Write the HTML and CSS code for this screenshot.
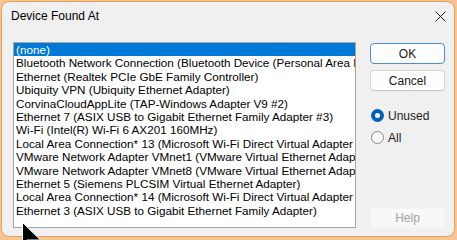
FILE: index.html
```html
<!DOCTYPE html>
<html lang="en">
<head>
    <meta charset="UTF-8">
    <title>Device Found At</title>
    <link rel="stylesheet" href="styles.css">
</head>
<body>

    <div class="dialog">
        <div class="dialog-title">
            <span>Device Found At</span>
            <button class="close-btn" aria-label="Close">
                <svg width="11" height="11" viewBox="0 0 11 11">
                    <path d="M0.5 0.5 L10.5 10.5 M10.5 0.5 L0.5 10.5" stroke="#1a1a1a" stroke-width="1" fill="none"/>
                </svg>
            </button>
        </div>

        <div class="dialog-body">
            <ul class="device-list">
                <li class="selected">(none)</li>
                <li>Bluetooth Network Connection (Bluetooth Device (Personal Area Network))</li>
                <li>Ethernet (Realtek PCIe GbE Family Controller)</li>
                <li>Ubiquity VPN (Ubiquity Ethernet Adapter)</li>
                <li>CorvinaCloudAppLite (TAP-Windows Adapter V9 #2)</li>
                <li>Ethernet 7 (ASIX USB to Gigabit Ethernet Family Adapter #3)</li>
                <li>Wi-Fi (Intel(R) Wi-Fi 6 AX201 160MHz)</li>
                <li>Local Area Connection* 13 (Microsoft Wi-Fi Direct Virtual Adapter #5)</li>
                <li>VMware Network Adapter VMnet1 (VMware Virtual Ethernet Adapter for VMnet1)</li>
                <li>VMware Network Adapter VMnet8 (VMware Virtual Ethernet Adapter for VMnet8)</li>
                <li>Ethernet 5 (Siemens PLCSIM Virtual Ethernet Adapter)</li>
                <li>Local Area Connection* 14 (Microsoft Wi-Fi Direct Virtual Adapter #6)</li>
                <li>Ethernet 3 (ASIX USB to Gigabit Ethernet Family Adapter)</li>
            </ul>

            <div class="side">
                <button class="btn btn-default">OK</button>
                <button class="btn">Cancel</button>

                <div class="radios">
                    <label class="radio checked"><span class="dot"></span>Unused</label>
                    <label class="radio"><span class="dot"></span>All</label>
                </div>

                <button class="btn btn-help" disabled>Help</button>
            </div>
        </div>
    </div>

    <!-- mouse pointer sitting over the bottom edge -->
    <svg class="pointer" width="20" height="20" viewBox="0 0 20 20">
        <path d="M0.5 0.5 L0.5 22 L5 18 L18.5 18 Z" fill="#000" stroke="#fff" stroke-width="1"/>
    </svg>

</body>
</html>
```

FILE: styles.css
```css
body {
    margin: 0;
    width: 457px;
    height: 240px;
    overflow: hidden;
    background-color: #f7c593;
    font-family: "Liberation Sans", Arial, sans-serif;
    font-size: 12px;
    color: #1a1a1a;
    position: relative;
}

.dialog {
    margin: 1px 0 0 1px;
    width: 452px;
    height: 234px;
    border: 1px solid #e99e55;
    border-radius: 8px;
    background-color: #f0f0f0;
    overflow: hidden;
}

.dialog-title {
    height: 28px;
    padding: 0 0 0 9px;
    display: flex;
    align-items: center;
    justify-content: space-between;
    font-size: 12px;
    color: #000;
}

.close-btn {
    width: 40px;
    height: 28px;
    border: none;
    background: none;
    padding: 0 0 0 17px;
    margin-right: 2px;
    display: flex;
    align-items: center;
    justify-content: center;
}

.dialog-body {
    display: flex;
    gap: 14px;
    padding: 12px 0 0 11px;
}

.device-list {
    width: 341px;
    height: 184px;
    margin: 0;
    padding: 0;
    list-style: none;
    background-color: #fff;
    border: 1px solid #a5a5a5;
    overflow: hidden;
    font-size: 11.7px;
}

.device-list li {
    height: 13.4px;
    line-height: 13.4px;
    padding-left: 2px;
    white-space: nowrap;
    overflow: hidden;
    color: #000;
}

.device-list li.selected {
    background-color: #0078d7;
    color: #fff;
}

.side {
    width: 75px;
    padding-top: 1px;
    display: flex;
    flex-direction: column;
}

.btn {
    height: 21px;
    margin-bottom: 6px;
    background-color: #fdfdfd;
    border: 1px solid #d5d5d5;
    border-bottom-color: #c4c4c4;
    border-radius: 4px;
    font-family: inherit;
    font-size: 12px;
    color: #1a1a1a;
    padding: 0;
}

.btn-default {
    border: 1px solid #4a90d9;
}

.btn-help {
    margin-top: auto;
    margin-bottom: 0;
    height: 20px;
    background-color: #f8f8f8;
    border-color: #f4f4f4;
    color: #a3a3a3;
}

.radios {
    padding-top: 12px;
    display: flex;
    flex-direction: column;
    gap: 9px;
}

.radio {
    display: flex;
    align-items: center;
    gap: 4px;
    height: 13px;
    padding-left: 1px;
}

.radio .dot {
    width: 11px;
    height: 11px;
    border: 1px solid #878787;
    border-radius: 50%;
    background-color: #f7f7f7;
}

.radio.checked .dot {
    width: 5px;
    height: 5px;
    border: 4px solid #005fb8;
    background-color: #fff;
}

.pointer {
    position: absolute;
    left: 22px;
    top: 222px;
}
```
